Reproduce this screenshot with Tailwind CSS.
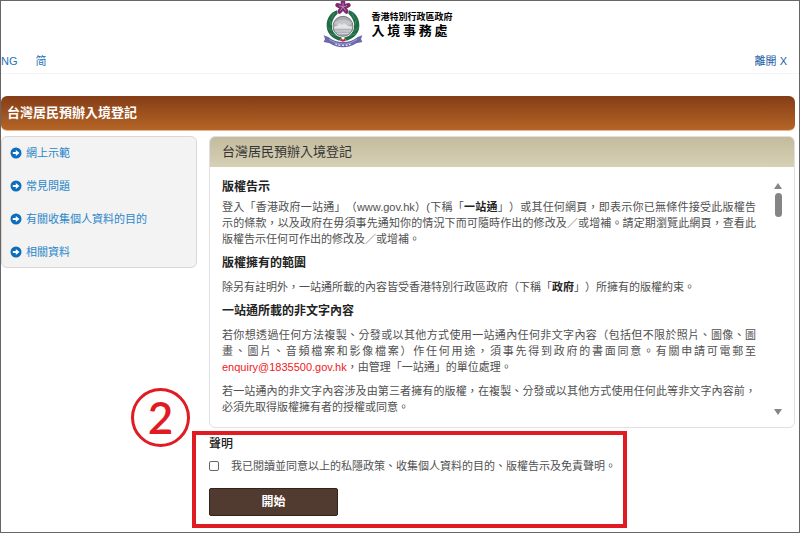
<!DOCTYPE html>
<html lang="zh-Hant">
<head>
    <meta charset="UTF-8">
    <meta name="viewport" content="width=device-width, initial-scale=1.0">
    <title>台灣居民預辦入境登記</title>
    <script src="https://cdn.jsdelivr.net/npm/@tailwindcss/browser@4"></script>
</head>
<body class="flex flex-col min-h-screen border border-[#666] bg-white font-['Liberation_Sans','Noto_Sans_CJK_TC',sans-serif] text-[11px] leading-4 text-[#505050] [text-spacing-trim:space-all]">
    <header class="border-b border-gray-100">
        <div class="flex justify-center gap-2 pr-6">
            <svg class="w-10 h-12" viewBox="0 0 120 144" aria-hidden="true">
                <!-- wreath -->
                <path d="M42 28C22 34 10 54 11 76c1 20 14 36 38 43l8-9C38 103 28 92 27 75c-1-15 6-28 17-37z" fill="#1f6b45"/>
                <path d="M78 28c20 6 32 26 31 48-1 20-14 36-38 43l-8-9c19-7 29-18 30-35 1-15-6-28-17-37z" fill="#1f6b45"/>
                <path d="M34 35l-9 18M20 56l5 18M13 78l14 12M21 98l20 6M86 35l9 18M100 56l-5 18M107 78L93 90M99 98l-20 6" stroke="#58987a" stroke-width="2" fill="none"/>
                <!-- harbour disc -->
                <circle cx="60" cy="76" r="33" fill="#fff"/>
                <circle cx="60" cy="76" r="30" fill="#a9adb2" stroke="#777c82" stroke-width="3"/>
                <path d="M34 66c14-13 38-13 52 0l-5 6H38z" fill="#c3c6c9"/>
                <path d="M33 78l12-5 5-8 5 7 8-5 9 6 15 4v5H33z" fill="#e3e4e5"/>
                <path d="M33 83h54M36 90h48M42 97h36" stroke="#d7d9db" stroke-width="3"/>
                <!-- ribbon -->
                <path d="M2 103l14 5c12 10 26 15 44 15s32-5 44-15l14-5-4 11 4 9-18 4c-12 8-25 12-40 12s-28-4-40-12l-18-4 4-9z" fill="#6a69ad"/>
                <path d="M18 115c25 19 59 19 84 0" stroke="#b9b8dc" stroke-width="2" fill="none"/>
                <path d="M37 129l5 2m4 1l6 1m5 0h6m5 0l6-1m4-1l5-2" stroke="#e4e3f3" stroke-width="4"/>
                <path d="M54 112l6 4 6-4 3 7-9 3-9-3z" fill="#c22d3d"/>
                <!-- bauhinia -->
                <g fill="#7b2c70">
                    <ellipse cx="60" cy="6" rx="7" ry="12"/>
                    <ellipse cx="60" cy="6" rx="7" ry="12" transform="rotate(72 60 18)"/>
                    <ellipse cx="60" cy="6" rx="7" ry="12" transform="rotate(144 60 18)"/>
                    <ellipse cx="60" cy="6" rx="7" ry="12" transform="rotate(216 60 18)"/>
                    <ellipse cx="60" cy="6" rx="7" ry="12" transform="rotate(288 60 18)"/>
                </g>
                <path d="M60 18V5M60 18l12-4M60 18l8 11M60 18l-8 11M60 18l-12-4" stroke="#dba9d0" stroke-width="2"/>
            </svg>
            <div class="flex flex-col pt-2 font-bold text-black">
                <span class="text-[9px] leading-4">香港特別行政區政府</span>
                <span class="w-19 text-[13px] leading-3 [text-align-last:justify]">入境事務處</span>
            </div>
        </div>
        <nav class="flex items-center gap-[18px] pt-1 pb-1 pr-3 text-[#2273b9]">
            <a href="#" class="hover:underline">NG</a>
            <a href="#" class="hover:underline">简</a>
            <a href="#" class="ml-auto text-[#1d5ea6] hover:underline">離開 X</a>
        </nav>
    </header>

    <main class="pt-[22px] pr-1">
        <h1 class="rounded-md border-b border-[#e8b58c] bg-linear-to-b from-[#853d17] to-[#b56526] px-1.5 py-2 text-[13px] leading-[18px] font-bold text-white">台灣居民預辦入境登記</h1>

        <div class="flex items-start gap-3 pt-[5px]">
            <ul class="flex w-49 shrink-0 flex-col gap-[17px] rounded-md border border-[#ddd6d6] bg-[#f3f3f3] px-2 py-2 pb-[7px] text-[#2a86c8]">
                <li>
                    <a href="#" class="flex items-center gap-1 hover:underline">
                        <svg class="size-3" viewBox="0 0 12 12" aria-hidden="true"><circle cx="6" cy="6" r="5.5" fill="#0b6dbd"/><path d="M2.8 5h3V2.9L9.5 6 5.8 9.1V7h-3z" fill="#fff"/></svg>
                        網上示範
                    </a>
                </li>
                <li>
                    <a href="#" class="flex items-center gap-1 hover:underline">
                        <svg class="size-3" viewBox="0 0 12 12" aria-hidden="true"><circle cx="6" cy="6" r="5.5" fill="#0b6dbd"/><path d="M2.8 5h3V2.9L9.5 6 5.8 9.1V7h-3z" fill="#fff"/></svg>
                        常見問題
                    </a>
                </li>
                <li>
                    <a href="#" class="flex items-center gap-1 hover:underline">
                        <svg class="size-3" viewBox="0 0 12 12" aria-hidden="true"><circle cx="6" cy="6" r="5.5" fill="#0b6dbd"/><path d="M2.8 5h3V2.9L9.5 6 5.8 9.1V7h-3z" fill="#fff"/></svg>
                        有關收集個人資料的目的
                    </a>
                </li>
                <li>
                    <a href="#" class="flex items-center gap-1 hover:underline">
                        <svg class="size-3" viewBox="0 0 12 12" aria-hidden="true"><circle cx="6" cy="6" r="5.5" fill="#0b6dbd"/><path d="M2.8 5h3V2.9L9.5 6 5.8 9.1V7h-3z" fill="#fff"/></svg>
                        相關資料
                    </a>
                </li>
            </ul>

            <div class="min-w-0 flex-1">
                <section class="overflow-hidden rounded-md border border-[#e0e0e4]">
                    <h2 class="bg-linear-to-b from-[#c3bb9c] to-[#d6d0b6] px-3 py-1.5 text-[13px] leading-[18px] text-[#333]">台灣居民預辦入境登記</h2>
                    <div class="flex gap-4 pt-3 pr-2.5 pb-3 pl-3">
                        <div class="flex-1 text-justify">
                            <h3 class="text-xs font-bold text-[#222]">版權告示</h3>
                            <p class="pt-1">登入「香港政府一站通」（www.gov.hk）(下稱「<b class="text-[#222]">一站通</b>」）或其任何網頁，即表示你已無條件接受此版權告示的條款，以及政府在毋須事先通知你的情況下而可隨時作出的修改及／或增補。請定期瀏覽此網頁，查看此版權告示任何可作出的修改及／或增補。</p>
                            <h3 class="pt-2 text-xs font-bold text-[#222]">版權擁有的範圍</h3>
                            <p class="pt-2">除另有註明外，一站通所載的內容皆受香港特別行政區政府（下稱「<b class="text-[#222]">政府</b>」）所擁有的版權約束。</p>
                            <h3 class="pt-2 text-xs font-bold text-[#222]">一站通所載的非文字內容</h3>
                            <p class="pt-2">若你想透過任何方法複製、分發或以其他方式使用一站通內任何非文字內容（包括但不限於照片、圖像、圖畫、圖片、音頻檔案和影像檔案）作任何用途，須事先得到政府的書面同意。有關申請可電郵至<a href="mailto:enquiry@1835500.gov.hk" class="text-[#f0181c]">enquiry@1835500.gov.hk</a>，由管理「一站通」的單位處理。</p>
                            <p class="pt-2">若一站通內的非文字內容涉及由第三者擁有的版權，在複製、分發或以其他方式使用任何此等非文字內容前，必須先取得版權擁有者的授權或同意。</p>
                        </div>
                        <!-- scroll track -->
                        <div class="flex w-3 flex-col items-center gap-1 pt-1" aria-hidden="true">
                            <svg class="h-1.5 w-2" viewBox="0 0 8 6"><path d="M4 0l4 6H0z" fill="#858585"/></svg>
                            <div class="h-6 w-[7px] rounded-full bg-[#858585]"></div>
                            <svg class="mt-auto h-1.5 w-2" viewBox="0 0 8 6"><path d="M0 0h8L4 6z" fill="#858585"/></svg>
                        </div>
                    </div>
                </section>

                <form class="relative pt-2">
                    <div class="pointer-events-none absolute top-[3px] -left-[17px] h-[97px] w-[435px] border-4 border-[#e01b22]"></div>
                    <div class="pointer-events-none absolute -top-10 -left-[78px] flex size-[59px] items-center justify-center rounded-full border-3 border-[#e01b22] pb-0.5 font-['Lato',sans-serif] text-[44px] font-semibold text-[#e01b22]">2</div>
                    <h3 class="text-xs leading-4 font-medium text-[#222]">聲明</h3>
                    <label class="flex items-center gap-3 pt-1.5">
                        <input type="checkbox" class="size-2.5 appearance-none rounded-xs border border-[#666] checked:bg-[#2273b9]">
                        我已閱讀並同意以上的私隱政策、收集個人資料的目的、版權告示及免責聲明。
                    </label>
                    <button type="button" class="mt-3.5 h-7 w-[129px] rounded-xs border border-[#33231c] bg-[#513a30] text-xs font-bold text-white hover:bg-[#6a4d40]">開始</button>
                </form>
            </div>
        </div>
    </main>
</body>
</html>
